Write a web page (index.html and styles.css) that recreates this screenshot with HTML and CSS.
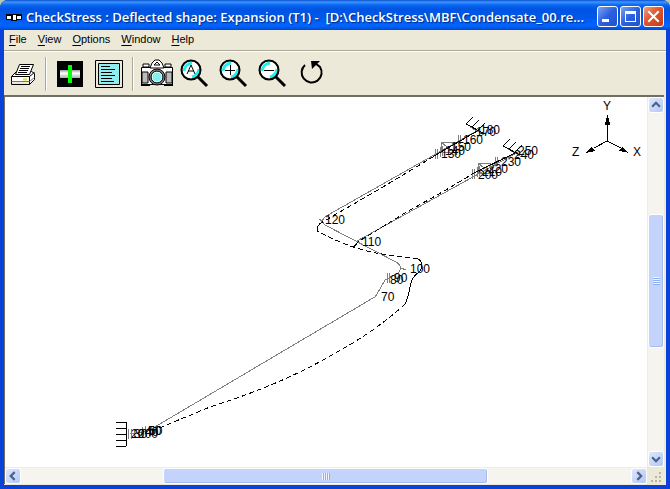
FILE: index.html
```
<!DOCTYPE html>
<html lang="en">
<head>
    <meta charset="utf-8">
    <title>CheckStress</title>
    <link rel="stylesheet" href="styles.css">
</head>
<body>
    <div class="window">
        <header class="title-bar">
            <svg class="app-icon" viewBox="0 0 16 16">
                <path d="M0 5h5v6H0zM11 5h5v6h-5z" fill="#000"/>
                <path d="M1 7h14v3H1z" fill="#fff"/>
                <path d="M5 5h6v7H5z" fill="#000"/>
                <path d="M7 6h3v5H7z" fill="#fff"/>
            </svg>
            <h1 class="title">CheckStress : Deflected shape: Expansion (T1) -&nbsp; [D:\CheckStress\MBF\Condensate_00.re...</h1>
            <div class="window-buttons">
                <button class="window-button" aria-label="Minimize">
                    <svg viewBox="0 0 19 19"><path d="M4 12h7v3H4z" fill="#fff"/></svg>
                </button>
                <button class="window-button" aria-label="Maximize">
                    <svg viewBox="0 0 19 19"><path d="M4 4h11v11H4zM5 7v7h9V7z" fill="#fff" fill-rule="evenodd"/></svg>
                </button>
                <button class="window-button close" aria-label="Close">
                    <svg viewBox="0 0 19 19"><path d="M5 5l9 9M14 5l-9 9" stroke="#fff" stroke-width="2" stroke-linecap="square"/></svg>
                </button>
            </div>
        </header>

        <div class="window-body">
            <nav class="menu-bar">
                <button class="menu-item"><u>F</u>ile</button>
                <button class="menu-item"><u>V</u>iew</button>
                <button class="menu-item"><u>O</u>ptions</button>
                <button class="menu-item"><u>W</u>indow</button>
                <button class="menu-item"><u>H</u>elp</button>
            </nav>

            <div class="toolbar">
                <button class="tool print" aria-label="Print">
                    <svg viewBox="0 0 32 32" stroke="#000">
                        <path d="M5.500 18.500l5-5h15l3 2v6l-5 5h-18z" fill="#fff"/>
                        <path d="M5.500 18.500h18l5-4M23.500 18.500v8" fill="none"/>
                        <path d="M6 23h17v3H6z" fill="#ece9d8" stroke="none"/>
                        <path d="M5.500 23.500h18l5-4" fill="none" stroke="#777"/>
                        <path d="M9.500 16.500l4-10h14l-4 10z" fill="#fff"/>
                        <path d="M15 8.500h9M14 10.500h9M13 12.500h9M12 14.500h9" fill="none"/>
                        <path d="M17 21.500h4" stroke="#e8e800" stroke-width="2"/>
                    </svg>
                </button>
                <span class="divider"></span>
                <button class="tool section" aria-label="Properties">
                    <svg viewBox="0 0 32 32">
                        <defs>
                            <linearGradient id="pipe" x2="0" y2="1">
                                <stop offset="0" stop-color="#999"/>
                                <stop offset=".4" stop-color="#fff"/>
                                <stop offset="1" stop-color="#aaa"/>
                            </linearGradient>
                        </defs>
                        <path d="M3 3h26v26H3z"/>
                        <path d="M6 12h20v8H6z" fill="url(#pipe)"/>
                        <path d="M14 7h4v18h-4z" fill="#0f0"/>
                    </svg>
                </button>
                <button class="tool report" aria-label="Report">
                    <svg viewBox="0 0 32 32">
                        <path d="M2.500 2.500h27v27h-27z" fill="#ece9d8" stroke="#000"/>
                        <path d="M5.500 5.500h21v21h-21z" fill="#90eef0" stroke="#000"/>
                        <path d="M8 8.500h9M8 11.500h14M8 14.500h11M8 17.500h14M8 20.500h11M8 23.500h13" stroke="#000"/>
                    </svg>
                </button>
                <span class="divider"></span>
                <button class="tool camera" aria-label="Snapshot">
                    <svg viewBox="0 0 32 32" stroke="#000">
                        <path d="M.5 9.500h31v17H.5z" fill="#fff"/>
                        <path d="M1 14h6v11H1zM25 14h6v11h-6z" fill="#bbb"/>
                        <path d="M2 6h6v3H2zM24 6h6v3h-6z" fill="#fff"/>
                        <path d="M9 10l2-5 3-3h4l3 3 2 5z" fill="#fff"/>
                        <path d="M13 7l3-3 3 3z" fill="#fff"/>
                        <circle cx="16" cy="19" r="8" fill="#888"/>
                        <circle cx="16" cy="19" r="5" fill="#80f0f0" stroke="#fff"/>
                        <circle cx="16" cy="19" r="6" fill="none"/>
                        <path d="M0 27h9M23 27h9" stroke-width="2"/>
                    </svg>
                </button>
                <button class="tool" aria-label="Zoom all">
                    <svg viewBox="0 0 32 32" fill="none" stroke="#000">
                        <circle cx="11" cy="12" r="9.500" fill="#fff"/>
                        <path d="M4 13q1-7 8-8M12 19q6-1 7-8" stroke="#2ee" stroke-width="3"/>
                        <circle cx="11" cy="12" r="9.500" stroke-width="2"/>
                        <path d="M7 16l4-9 4 9M8 13h6"/>
                        <path d="M18 19l9 9" stroke-width="3"/>
                    </svg>
                </button>
                <button class="tool" aria-label="Zoom in">
                    <svg viewBox="0 0 32 32" fill="none" stroke="#000">
                        <circle cx="11" cy="12" r="9.500" fill="#fff"/>
                        <path d="M4 13q1-7 8-8M12 19q6-1 7-8" stroke="#2ee" stroke-width="3"/>
                        <circle cx="11" cy="12" r="9.500" stroke-width="2"/>
                        <path d="M6 12.500h10M11.500 7v10"/>
                        <path d="M18 19l9 9" stroke-width="3"/>
                    </svg>
                </button>
                <button class="tool" aria-label="Zoom out">
                    <svg viewBox="0 0 32 32" fill="none" stroke="#000">
                        <circle cx="11" cy="12" r="9.500" fill="#fff"/>
                        <path d="M4 13q1-7 8-8M12 19q6-1 7-8" stroke="#2ee" stroke-width="3"/>
                        <circle cx="11" cy="12" r="9.500" stroke-width="2"/>
                        <path d="M6 12.500h10"/>
                        <path d="M18 19l9 9" stroke-width="3"/>
                    </svg>
                </button>
                <button class="tool" aria-label="Rotate">
                    <svg viewBox="0 0 32 32" fill="none" stroke="#000" stroke-width="2">
                        <path d="M8 7a10 10 0 1 0 15 2l-5-4"/>
                        <path d="M14 3h9l-8 8z" fill="#000" stroke="none"/>
                    </svg>
                </button>
            </div>

            <main class="view">
                <svg class="model" viewBox="5 97 642 370">
                    <!-- undeflected pipe -->
                    <g class="pipe">
                        <path d="M130 434L148 431L373 298Q376 297 377 294L385 280L398 273Q404 267 396 262L325 225Q319 220 328 215L480 129"/>
                        <path d="M357 241L520 151M357 241l6 4M401 268l5 2M319 219l4 3"/>
                        <path d="M374 298l4-5M387 273v10M389 273v10"/>
                        <path d="M128 429v10M131 429v10M134 430v8M142 427v8M145 426v8"/>
                        <path d="M435 149v10M437 149v10M440 147v10M442 146v10M458 135v9M460 135v9"/>
                        <path d="M441 142h12v10h-12zM441 142l12 10M478 163h12v10h-12zM478 163l12 10"/>
                        <path d="M472 169v10M474 169v10M477 167v10M479 166v10M495 157v9M497 157v9"/>
                        <path d="M470 127l14 8M508 149l14 8"/>
                    </g>
                    <!-- deflected shape -->
                    <g class="deflected">
                        <path d="M152 431L210 407Q280 385 330 356Q375 332 405 304"/>
                        <path d="M418 259L382 254Q350 249 317 231M319 224L378 190L436 155"/>
                        <path d="M361 240L405 213L446 190L474 173"/>
                    </g>
                    <g class="solid">
                        <path d="M405 304C409 298 409 286 413 278Q415 275 420 271Q425 263 418 259"/>
                        <path d="M317 231q0-5 3-7M353 248l6-7M434 156L479 130M472 174L517 152"/>
                        <path d="M126 422v24M116 422h10M116 428h10M116 434h10M116 440h10M116 446h10"/>
                        <path d="M466 124l17 9M466 124l7-7M472 127l7-7M478 130l7-7M503 146l17 9M503 146l7-7M509 149l7-7M515 152l7-7"/>
                    </g>
                    <!-- node numbers -->
                    <g class="node">
                        <text x="131" y="438">20</text>
                        <text x="134" y="438">30</text>
                        <text x="138" y="438">200</text>
                        <text x="145" y="436">40</text>
                        <text x="148" y="435">50</text>
                        <text x="149" y="435">60</text>
                        <text x="381" y="301">70</text>
                        <text x="390" y="284">80</text>
                        <text x="394" y="282">90</text>
                        <text x="410" y="273">100</text>
                        <text x="362" y="246">110</text>
                        <text x="325" y="224">120</text>
                        <text x="441" y="158">130</text>
                        <text x="445" y="155">140</text>
                        <text x="451" y="151">150</text>
                        <text x="463" y="144">160</text>
                        <text x="476" y="136">170</text>
                        <text x="480" y="134">180</text>
                        <text x="478" y="179">200</text>
                        <text x="482" y="176">210</text>
                        <text x="488" y="173">220</text>
                        <text x="501" y="166">230</text>
                        <text x="514" y="159">240</text>
                        <text x="518" y="155">250</text>
                    </g>
                    <!-- axis triad -->
                    <g class="axes">
                        <path d="M607.500 141V124M607 141L594 148M607 141L621 148" fill="none" stroke="#000"/>
                        <path d="M607.500 115l3 10h-6zM585 153l7-6 3 4zM629 153l-7-6-3 4z"/>
                        <text x="603" y="110">Y</text>
                        <text x="572" y="156">Z</text>
                        <text x="633" y="156">X</text>
                    </g>
                </svg>

                <div class="scrollbar vertical">
                    <button class="scroll-button" aria-label="Scroll up">
                        <svg viewBox="0 0 9 9"><path d="M1 6l3.500-3.500L8 6"/></svg>
                    </button>
                    <div class="track-before"></div>
                    <div class="thumb"><span class="grip"></span></div>
                    <div class="track-after"></div>
                    <button class="scroll-button" aria-label="Scroll down">
                        <svg viewBox="0 0 9 9"><path d="M1 3l3.500 3.500L8 3"/></svg>
                    </button>
                </div>

                <div class="scrollbar horizontal">
                    <button class="scroll-button" aria-label="Scroll left">
                        <svg viewBox="0 0 9 9"><path d="M6 1L2.500 4.500 6 8"/></svg>
                    </button>
                    <div class="track-before"></div>
                    <div class="thumb"><span class="grip"></span></div>
                    <div class="track-after"></div>
                    <button class="scroll-button" aria-label="Scroll right">
                        <svg viewBox="0 0 9 9"><path d="M3 1l3.500 3.500L3 8"/></svg>
                    </button>
                </div>

                <svg class="size-grip" viewBox="0 0 17 17">
                    <path d="M12 5h2v2h-2zM8 9h2v2H8zM12 9h2v2h-2zM4 13h2v2H4zM8 13h2v2H8zM12 13h2v2h-2z" fill="#b8b4a2"/>
                </svg>
            </main>
        </div>
    </div>
</body>
</html>
```
FILE: styles.css
```
* {
    box-sizing: border-box;
}
body {
    margin: 0;
    background: #b9c8a8;
    font-family: "Liberation Sans", sans-serif;
    font-size: 11px;
}
button {
    border: 0;
    padding: 0;
    background: none;
    font: inherit;
    color: inherit;
}
svg {
    display: block;
}
.window {
    display: flex;
    flex-direction: column;
    height: 100vh;
    border-radius: 8px 8px 0 0;
    background: #0842d8;
    overflow: hidden;
}

/* title bar */
.title-bar {
    display: flex;
    align-items: center;
    gap: 4px;
    height: 30px;
    padding: 3px 6px 0;
    background: linear-gradient(#0a50d0 0, #3f94ff 2px, #0868f2 5px, #0054e3 9px, #0058ea 18px, #0066ff 26px, #0048cf 30px);
}
.app-icon {
    width: 16px;
    height: 16px;
    flex: none;
}
.title {
    flex: 1;
    min-width: 0;
    margin: 0;
    overflow: hidden;
    white-space: nowrap;
    color: #fff;
    font-family: "Open Sans", sans-serif;
    font-size: 13px;
    font-weight: 600;
    text-shadow: 1px 1px 1px #002a80;
}
.window-buttons {
    display: flex;
    gap: 2px;
}
.window-button {
    width: 21px;
    height: 21px;
    border: 1px solid #fff;
    border-radius: 3px;
    background: linear-gradient(135deg, #7ba2f4, #2a5fe0 50%, #2053c8);
}
.window-button.close {
    background: linear-gradient(135deg, #f0a088, #e2532c 45%, #c23c14);
}

.window-body {
    flex: 1;
    display: flex;
    flex-direction: column;
    min-height: 0;
    margin: 0 4px 4px;
    background: #ece9d8;
}
.menu-bar {
    display: flex;
    gap: 11px;
    height: 21px;
    padding: 0 5px 2px;
    border-bottom: 1px solid #aca899;
}
.menu-item u {
    text-underline-offset: 2px;
}

/* toolbar */
.toolbar {
    display: flex;
    align-items: center;
    gap: 7px;
    height: 44px;
    padding: 0 2px;
    border-top: 1px solid #fff;
}
.tool {
    width: 32px;
    height: 32px;
    flex: none;
}
.divider {
    width: 2px;
    height: 34px;
    border-left: 1px solid #aca899;
    border-right: 1px solid #fff;
}

/* drawing area */
.view {
    flex: 1;
    display: grid;
    grid-template-columns: 1fr 17px;
    grid-template-rows: 1fr 17px;
    min-height: 0;
    margin: 0 2px 1px 0;
    border-top: 2px solid #716f64;
    border-left: 1px solid #716f64;
}
.model {
    width: 100%;
    height: 100%;
    min-height: 0;
    background: #fff;
    font-family: "Liberation Sans", sans-serif;
    font-size: 12px;
}
.model path {
    shape-rendering: crispEdges;
}
.pipe {
    fill: none;
    stroke: #808080;
}
.deflected {
    fill: none;
    stroke: #000;
    stroke-dasharray: 5 3;
}
.solid {
    fill: none;
    stroke: #000;
}

/* scroll bars */
.scrollbar {
    display: flex;
    background: #f5f4ee;
}
.vertical {
    flex-direction: column;
    border-left: 1px solid #eeede5;
}
.horizontal {
    border-top: 1px solid #eeede5;
}
.scroll-button {
    display: flex;
    align-items: center;
    justify-content: center;
    flex: none;
    width: 16px;
    height: 16px;
    border: 1px solid #fff;
    border-radius: 3px;
    background: linear-gradient(135deg, #dce6ff, #b4c8f6);
}
.scroll-button svg {
    width: 10px;
    height: 10px;
    fill: none;
    stroke: #4d6185;
    stroke-width: 2;
}
.thumb {
    display: flex;
    align-items: center;
    justify-content: center;
    border: 1px solid #fff;
    border-radius: 3px;
    background: #c4d3fc;
    box-shadow: inset -1px -1px 0 #a6baf0;
}
.vertical .track-before {
    flex: 102;
}
.vertical .thumb {
    flex: 132;
}
.vertical .track-after {
    flex: 104;
}
.horizontal .track-before {
    flex: 142;
}
.horizontal .thumb {
    flex: 323;
}
.horizontal .track-after {
    flex: 143;
}
.grip {
    width: 7px;
    height: 8px;
    background: repeating-linear-gradient(#eef4ff 0 1px, #8cb0f8 1px 2px);
}
.horizontal .grip {
    width: 8px;
    height: 7px;
    background: repeating-linear-gradient(90deg, #eef4ff 0 1px, #8cb0f8 1px 2px);
}
.size-grip {
    width: 17px;
    height: 17px;
}
```
